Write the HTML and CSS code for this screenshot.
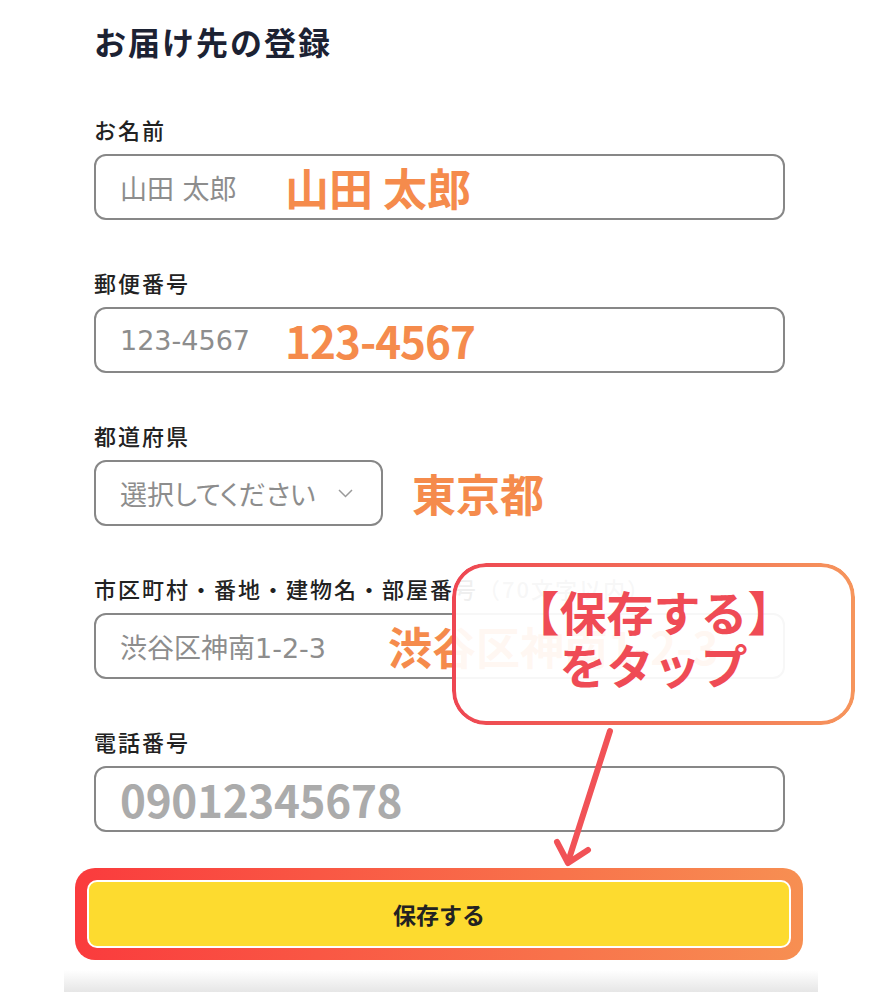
FILE: index.html
```html
<!DOCTYPE html>
<html lang="ja">
<head>
<meta charset="utf-8">
<title>お届け先の登録</title>
<link rel="stylesheet" href="styles.css">
</head>
<body>
<div class="page">
  <h1 class="title">お届け先の登録</h1>

  <div class="field">
    <div class="label">お名前</div>
    <div class="box">
      <span class="ph ph-short">山田 太郎</span>
      <span class="note">山田 太郎</span>
    </div>
  </div>

  <div class="field">
    <div class="label">郵便番号</div>
    <div class="box">
      <span class="ph ph-short">123-4567</span>
      <span class="note note-num">123-4567</span>
    </div>
  </div>

  <div class="field">
    <div class="label">都道府県</div>
    <div class="select-row">
      <div class="box select">
        <span class="ph">選択してください</span>
        <svg class="chev" width="15" height="9" viewBox="0 0 15 9"><polyline points="1,1 7.5,7.5 14,1" fill="none" stroke="#9a9a9a" stroke-width="1.5"/></svg>
      </div>
      <span class="note">東京都</span>
    </div>
  </div>

  <div class="field">
    <div class="label">市区町村・番地・建物名・部屋番号<span class="hint">（70文字以内）</span></div>
    <div class="box">
      <span class="ph ph-long">渋谷区神南1-2-3</span>
      <span class="note">渋谷区神南1-2-3</span>
    </div>
  </div>

  <div class="field field-last">
    <div class="label">電話番号</div>
    <div class="box">
      <span class="phone">09012345678</span>
    </div>
  </div>

  <div class="cta"><div class="btn">保存する</div></div>
  <div class="shade"></div>

  <div class="callout"><p class="callout-text">【保存する】<br>をタップ</p></div>
  <svg class="arrow" width="80" height="150" viewBox="540 722 80 150">
    <g fill="none" stroke="#f15257" stroke-width="6" stroke-linecap="round" stroke-linejoin="round">
      <line x1="610" y1="731" x2="568" y2="862"/>
      <polyline points="557,842 568,863 588,850"/>
    </g>
  </svg>
</div>
</body>
</html>
```

FILE: styles.css
```css
* { box-sizing: border-box; }

body {
  margin: 0;
  background: #fff;
  font-family: "Noto Sans CJK JP", "Noto Sans", sans-serif;
  color: #222;
}

.page {
  position: relative;
  width: 880px;
  height: 1000px;
  padding: 23px 95px 0 94px;
  overflow: hidden;
}

.title {
  margin: 0 0 56px;
  font-size: 32px;
  line-height: 36px;
  font-weight: 700;
  letter-spacing: 2px;
  color: #1c2233;
}

.field { margin-bottom: 48px; }
.field-last { margin-bottom: 36px; }

.label {
  font-size: 22px;
  line-height: 28px;
  margin-bottom: 11px;
  letter-spacing: 2px;
  font-weight: 500;
  color: #222;
  white-space: nowrap;
}

.hint { color: #8c8c8c; }

.box {
  height: 66px;
  border: 2px solid #878787;
  border-radius: 12px;
  display: flex;
  align-items: center;
  padding-left: 24px;
  background: #fff;
}

.ph {
  font-family: "DejaVu Sans", "Noto Sans CJK JP", sans-serif;
  font-size: 27px;
  font-feature-settings: "palt";
  color: #8d8d8d;
  white-space: nowrap;
}

.ph-short { width: 165px; flex: none; }
.ph-long { width: 268px; flex: none; }

.note {
  font-size: 44px;
  line-height: 1;
  font-weight: 700;
  color: #f58b4c;
  white-space: nowrap;
}

.note-num { letter-spacing: -1px; }

.select-row {
  display: flex;
  align-items: center;
  gap: 29px;
}

.select {
  width: 289px;
  justify-content: space-between;
  padding-right: 28px;
}

.chev { display: block; }

.phone {
  font-size: 44px;
  line-height: 1;
  font-weight: 700;
  color: #ababab;
  letter-spacing: -0.3px;
}

.cta {
  margin: 0 -18px 0 -19px;
  padding: 12px;
  border-radius: 20px;
  background: linear-gradient(90deg, #fa3b3d, #f78f52);
}

.btn {
  height: 68px;
  border: 2px solid #fff;
  border-radius: 10px;
  background: #fddb2f;
  display: flex;
  align-items: center;
  justify-content: center;
  font-size: 23px;
  font-weight: 700;
  color: #222;
}

.shade {
  margin: 10px -33px 0 -30px;
  height: 22px;
  background: linear-gradient(#fff, #e6e6e6);
}

.callout {
  position: absolute;
  left: 452px;
  top: 563px;
  width: 403px;
  height: 162px;
  border-radius: 34px;
  background: rgba(255, 255, 255, 0.93);
  text-align: center;
  padding-top: 21px;
}

.callout::before {
  content: "";
  position: absolute;
  inset: 0;
  border-radius: inherit;
  padding: 4px;
  background: linear-gradient(90deg, #ee4652, #f6955c);
  -webkit-mask: linear-gradient(#000 0 0) content-box, linear-gradient(#000 0 0);
  -webkit-mask-composite: xor;
  mask-composite: exclude;
}

.callout-text {
  margin: 0;
  font-size: 47px;
  line-height: 53px;
  font-weight: 700;
  color: #ef4b55;
}

.arrow {
  position: absolute;
  left: 540px;
  top: 722px;
}
```
